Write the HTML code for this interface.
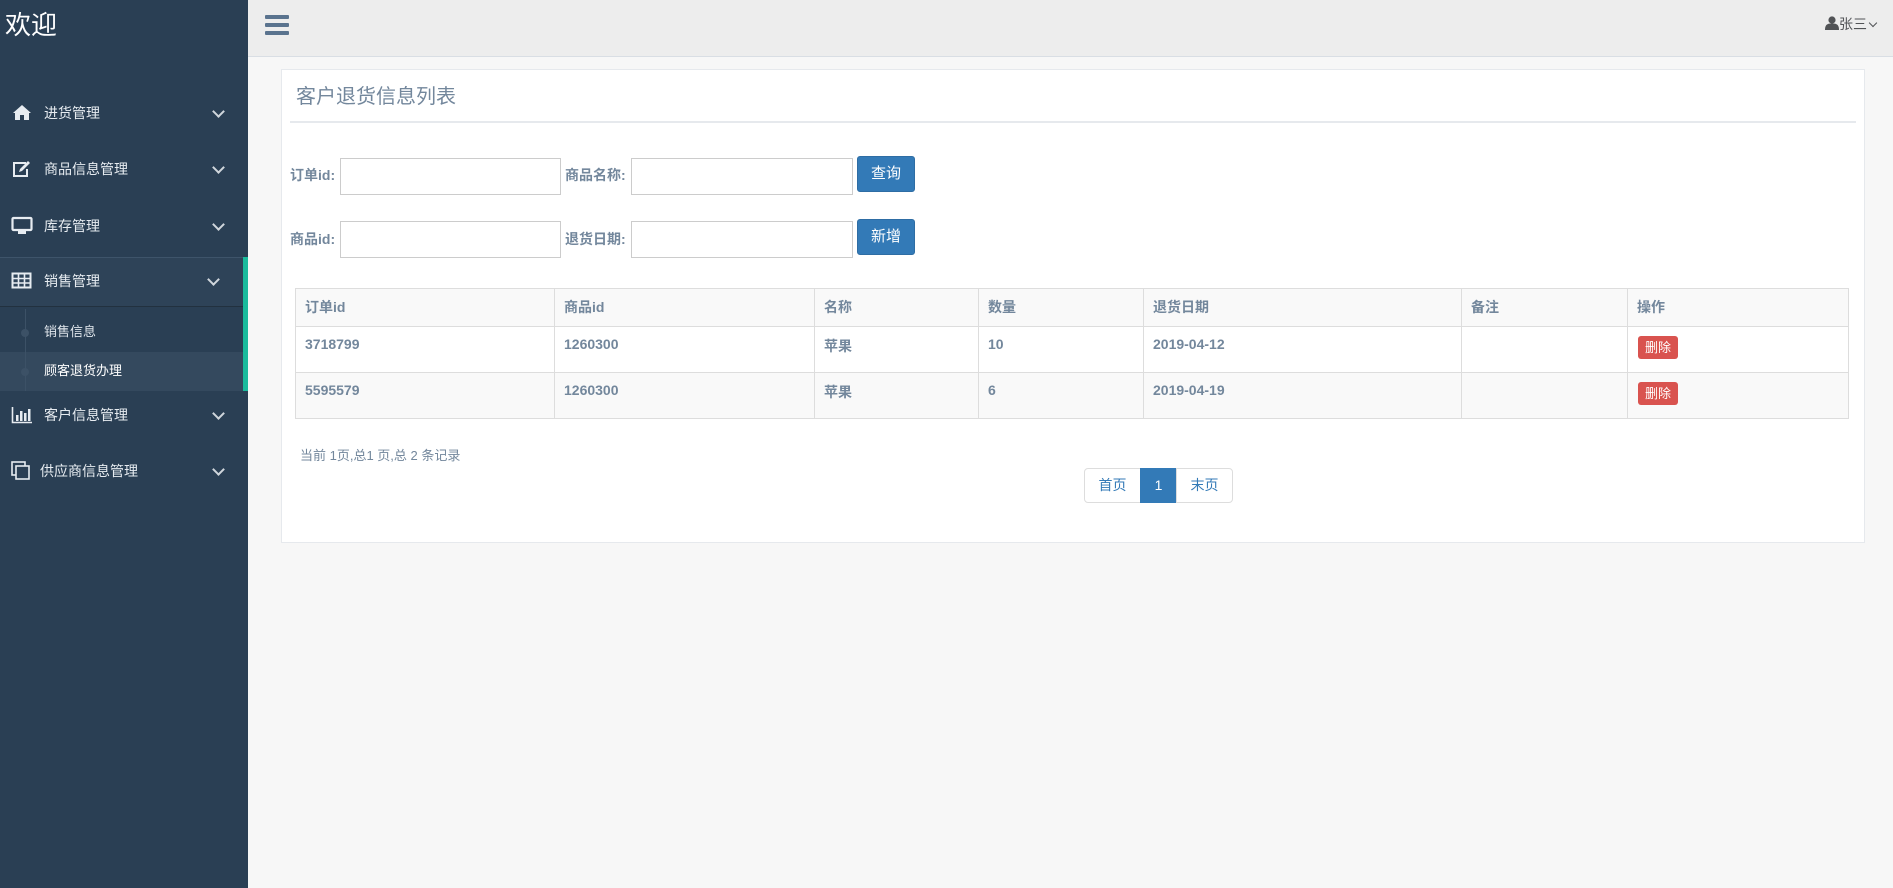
<!DOCTYPE html>
<html><head><meta charset="utf-8"><style>
*{box-sizing:border-box;margin:0;padding:0}
body{width:1893px;height:888px;overflow:hidden;background:#f7f7f7;font-family:"Liberation Sans","Noto Sans CJK SC",sans-serif;position:relative}
.abs{position:absolute}
#side{left:0;top:0;width:248px;height:888px;background:#2a3f54}
.mi{position:absolute;left:0;width:248px;color:#e7ecf1;font-size:14px;line-height:20px}
.mi .t{position:absolute;left:44px;top:0}
.mi .ic{position:absolute;left:11px;top:0;width:22px;height:20px}
.chev{position:absolute;left:214px;top:4px;width:9px;height:9px;border-right:2.5px solid #d0d6dc;border-bottom:2.5px solid #d0d6dc;transform:rotate(45deg)}
#top{left:248px;top:0;width:1645px;height:57px;background:#ededed;border-bottom:1px solid #d9dee4}
#panel{left:281px;top:69px;width:1584px;height:474px;background:#fff;border:1px solid #e6e9ed}
.lbl{position:absolute;font-size:14px;font-weight:bold;color:#73879c;line-height:20px}
.inp{position:absolute;height:37px;border:1px solid #ccc;background:#fff}
.btn{position:absolute;width:58px;height:36px;background:#337ab7;border:1px solid #2e6da4;border-radius:3px;color:#fff;font-size:15px;text-align:center;line-height:34px}
table{position:absolute;left:295px;top:288px;width:1554px;border-collapse:collapse;font-size:14px;font-weight:bold;color:#73879c}
td,th{border:1px solid #ddd;text-align:left;padding:0 9px;vertical-align:top}
th{height:37px;line-height:37px;background:#f9f9f9}
td{height:46px;padding-top:9px}
tr.s td{background:#f9f9f9}
.del{display:inline-block;background:#d9534f;color:#fff;font-size:13px;font-weight:normal;border-radius:3px;width:40px;height:23px;line-height:23px;text-align:center;margin-left:1px}
.pg{position:absolute;top:468px;height:35px;line-height:33px;font-size:14px;text-align:center;color:#337ab7;border:1px solid #ddd;background:#fff}
</style></head><body>
<div id="side" class="abs">
 <div class="abs" style="left:5px;top:9px;color:#fff;font-size:26px;line-height:32px">欢迎</div>
 <div class="abs" style="left:0;top:257px;width:243px;height:50px;background:#2e4358;border-top:1px solid #3e546a;border-bottom:1px solid #22313f"></div>
 <div class="abs" style="left:0;top:307px;width:243px;height:84px;background:#2a3f54"></div>
 <div class="abs" style="left:0;top:352px;width:243px;height:39px;background:#34495e"></div>
 <div class="abs" style="left:243px;top:257px;width:5px;height:134px;background:#1abb9c"></div>
 <div class="abs" style="left:25px;top:309px;width:1px;height:82px;background:#3c5166"></div>
 <div class="abs" style="left:21px;top:329px;width:8px;height:8px;border-radius:50%;background:#3c5166"></div>
 <div class="abs" style="left:21px;top:368px;width:8px;height:8px;border-radius:50%;background:#3c5166"></div>

 <div class="mi" style="top:103px"><svg class="ic" viewBox="0 0 22 20"><path d="M2 10 L11 2 L20 10 L18 10 L18 17 L13 17 L13 12 L9 12 L9 17 L4 17 L4 10Z" fill="#e7ecf1"/></svg><span class="t">进货管理</span><i class="chev"></i></div>
 <div class="mi" style="top:159px"><svg class="ic" viewBox="0 0 22 20"><path d="M15 4 H3 V17 H16 V10" stroke="#e7ecf1" stroke-width="2" fill="none"/><path d="M8 13 L9 10 L17 2 L19 4 L11 12Z" fill="#e7ecf1"/></svg><span class="t">商品信息管理</span><i class="chev"></i></div>
 <div class="mi" style="top:216px"><svg class="ic" viewBox="0 0 22 20"><rect x="1.5" y="2" width="19" height="12" rx="1" stroke="#e7ecf1" stroke-width="2.2" fill="none"/><rect x="7" y="15" width="8" height="3" fill="#e7ecf1"/></svg><span class="t">库存管理</span><i class="chev"></i></div>
 <div class="mi" style="top:271px"><svg class="ic" viewBox="0 0 22 20"><rect x="1.5" y="2.5" width="18" height="14" stroke="#e7ecf1" stroke-width="2" fill="none"/><path d="M1.5 7.5H19.5M1.5 12H19.5M7.5 2.5V16.5M13.5 2.5V16.5" stroke="#e7ecf1" stroke-width="1.6"/></svg><span class="t">销售管理</span><i class="chev" style="left:209px"></i></div>
 <div class="mi" style="top:322px;color:#e0e6ec;font-size:13px"><span class="t">销售信息</span></div>
 <div class="mi" style="top:361px;color:#fff;font-size:13px"><span class="t">顾客退货办理</span></div>
 <div class="mi" style="top:405px"><svg class="ic" viewBox="0 0 22 20"><path d="M1.5 2V17.5H21" stroke="#e7ecf1" stroke-width="1.6" fill="none"/><rect x="5" y="10" width="2.5" height="6" fill="#e7ecf1"/><rect x="9" y="6" width="2.5" height="10" fill="#e7ecf1"/><rect x="13" y="8" width="2.5" height="8" fill="#e7ecf1"/><rect x="17" y="4" width="2.5" height="12" fill="#e7ecf1"/></svg><span class="t">客户信息管理</span><i class="chev"></i></div>
 <div class="mi" style="top:461px"><svg class="ic" viewBox="0 0 22 20"><rect x="1" y="1" width="13" height="13" stroke="#e7ecf1" stroke-width="1.6" fill="none"/><rect x="5" y="5" width="13" height="13" stroke="#e7ecf1" stroke-width="1.6" fill="#2a3f54"/></svg><span class="t" style="left:40px">供应商信息管理</span><i class="chev"></i></div>
</div>

<div id="top" class="abs">
 <div class="abs" style="left:17px;top:15px;width:24px;height:4px;background:#5a738e;border-radius:1px"></div>
 <div class="abs" style="left:17px;top:23px;width:24px;height:4px;background:#5a738e;border-radius:1px"></div>
 <div class="abs" style="left:17px;top:31px;width:24px;height:4px;background:#5a738e;border-radius:1px"></div>
 <svg class="abs" style="left:1577px;top:16px" width="14" height="14" viewBox="0 0 14 14"><circle cx="7" cy="4" r="3.6" fill="#515356"/><path d="M0 14 C0 8 3 7.5 7 7.5 C11 7.5 14 8 14 14Z" fill="#515356"/></svg>
 <div class="abs" style="left:1591px;top:15px;font-size:14px;color:#515356;line-height:18px">张三</div>
 <div class="abs" style="left:1622px;top:20px;width:6px;height:6px;border-right:1px solid #515356;border-bottom:1px solid #515356;transform:rotate(45deg)"></div>
</div>

<div id="panel" class="abs"></div>
<div class="abs" style="left:296px;top:84px;font-size:20px;color:#73879c;line-height:26px">客户退货信息列表</div>
<div class="abs" style="left:290px;top:121px;width:1566px;height:2px;background:#e6e9ed"></div>

<div class="lbl" style="left:290px;top:165px">订单id:</div>
<div class="inp" style="left:340px;top:158px;width:221px"></div>
<div class="lbl" style="left:565px;top:165px">商品名称:</div>
<div class="inp" style="left:631px;top:158px;width:222px"></div>
<div class="btn" style="left:857px;top:156px">查询</div>

<div class="lbl" style="left:290px;top:229px">商品id:</div>
<div class="inp" style="left:340px;top:221px;width:221px"></div>
<div class="lbl" style="left:565px;top:229px">退货日期:</div>
<div class="inp" style="left:631px;top:221px;width:222px"></div>
<div class="btn" style="left:857px;top:219px">新增</div>

<table>
<colgroup><col style="width:259px"><col style="width:260px"><col style="width:164px"><col style="width:165px"><col style="width:318px"><col style="width:166px"><col></colgroup>
<tr><th>订单id</th><th>商品id</th><th>名称</th><th>数量</th><th>退货日期</th><th>备注</th><th>操作</th></tr>
<tr><td>3718799</td><td>1260300</td><td>苹果</td><td>10</td><td>2019-04-12</td><td></td><td><span class="del">删除</span></td></tr>
<tr class="s"><td>5595579</td><td>1260300</td><td>苹果</td><td>6</td><td>2019-04-19</td><td></td><td><span class="del">删除</span></td></tr>
</table>

<div class="abs" style="left:300px;top:447px;font-size:13px;color:#73879c;line-height:18px">当前 1页,总1 页,总 2 条记录</div>
<div class="pg" style="left:1084px;width:57px;border-radius:4px 0 0 4px">首页</div>
<div class="pg" style="left:1140px;width:37px;background:#337ab7;border-color:#337ab7;color:#fff">1</div>
<div class="pg" style="left:1176px;width:57px;border-radius:0 4px 4px 0">末页</div>
</body></html>
